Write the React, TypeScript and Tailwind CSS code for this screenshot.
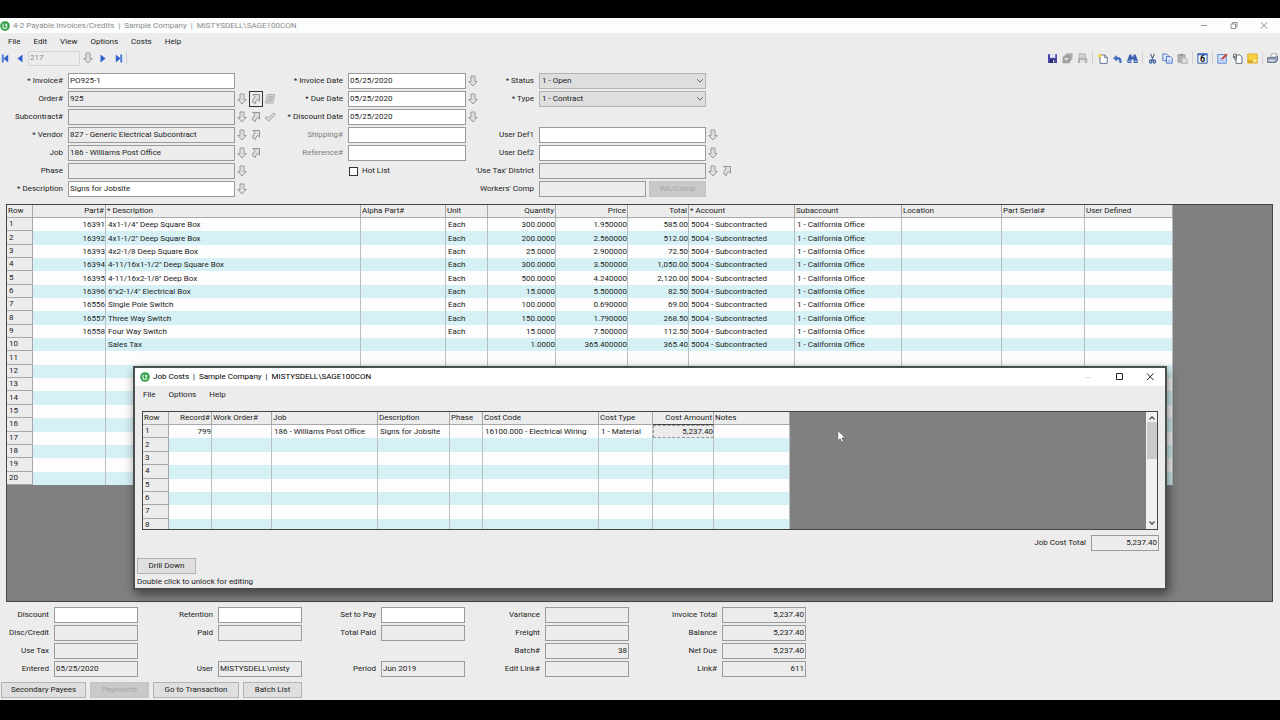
import { useId } from "react";
import type { ReactNode } from "react";

type Column = { title: string; width: number; right?: boolean };

const invoiceColumns: Column[] = [
  { title: "Row", width: 26 },
  { title: "Part#", width: 73, right: true },
  { title: "* Description", width: 255 },
  { title: "Alpha Part#", width: 85 },
  { title: "Unit", width: 42 },
  { title: "Quantity", width: 68, right: true },
  { title: "Price", width: 72, right: true },
  { title: "Total", width: 61, right: true },
  { title: "* Account", width: 106 },
  { title: "Subaccount", width: 107 },
  { title: "Location", width: 100 },
  { title: "Part Serial#", width: 83 },
  { title: "User Defined", width: 88 },
];

const ACCOUNT = "5004 - Subcontracted";
const OFFICE = "1 - California Office";

const invoiceRows: string[][] = [
  ["16391", "4x1-1/4\" Deep Square Box", "", "Each", "300.0000", "1.950000", "585.00", ACCOUNT, OFFICE],
  ["16392", "4x1-1/2\" Deep Square Box", "", "Each", "200.0000", "2.560000", "512.00", ACCOUNT, OFFICE],
  ["16393", "4x2-1/8 Deep Square Box", "", "Each", "25.0000", "2.900000", "72.50", ACCOUNT, OFFICE],
  ["16394", "4-11/16x1-1/2\" Deep Square Box", "", "Each", "300.0000", "3.500000", "1,050.00", ACCOUNT, OFFICE],
  ["16395", "4-11/16x2-1/8\" Deep Box", "", "Each", "500.0000", "4.240000", "2,120.00", ACCOUNT, OFFICE],
  ["16396", "6\"x2-1/4\" Electrical Box", "", "Each", "15.0000", "5.500000", "82.50", ACCOUNT, OFFICE],
  ["16556", "Single Pole Switch", "", "Each", "100.0000", "0.690000", "69.00", ACCOUNT, OFFICE],
  ["16557", "Three Way Switch", "", "Each", "150.0000", "1.790000", "268.50", ACCOUNT, OFFICE],
  ["16558", "Four Way Switch", "", "Each", "15.0000", "7.500000", "112.50", ACCOUNT, OFFICE],
  ["", "Sales Tax", "", "", "1.0000", "365.400000", "365.40", ACCOUNT, OFFICE],
];

const jobColumns: Column[] = [
  { title: "Row", width: 26 },
  { title: "Record#", width: 43, right: true },
  { title: "Work Order#", width: 60 },
  { title: "Job", width: 106 },
  { title: "Description", width: 72 },
  { title: "Phase", width: 33 },
  { title: "Cost Code", width: 116 },
  { title: "Cost Type", width: 54 },
  { title: "Cost Amount", width: 61, right: true },
  { title: "Notes", width: 76 },
];

const jobRows: string[][] = [
  ["799", "", "186 - Williams Post Office", "Signs for Jobsite", "", "16100.000 - Electrical Wiring", "1 - Material", "5,237.40"],
];

/* ---------- icons ---------- */

function DownArrow() {
  return (
    <svg viewBox="0 0 10 12" className="w-[10px] h-3" fill="#dedede" stroke="#9b9b9b" strokeWidth="1">
      <path d="M3 1h4v5.5h2.3L5 11 .7 6.5H3z" />
    </svg>
  );
}

function JumpArrow() {
  return (
    <svg viewBox="0 0 10 12" className="w-[10px] h-3" fill="#dedede" stroke="#929292" strokeWidth="1">
      <path d="M1.8 1.5h6.7v6.6L6.6 6.4C5.4 7.4 4.6 8.6 4.4 10.6L1.6 8.9C1.7 6.7 2.6 5 4.1 3.8z" />
    </svg>
  );
}

function ListIcon() {
  return (
    <svg viewBox="0 0 12 12" className="w-3 h-3" fill="#d6d6d6" stroke="#b0b0b0" strokeWidth="0.9">
      <path d="M3.5 1.5h7.2l-1.6 8.6H1.4z" />
      <path d="M4.4 3.8h4.8M3.8 6h4.8M3 8h5" stroke="#9a9a9a" />
    </svg>
  );
}

function CheckIcon() {
  return (
    <svg viewBox="0 0 12 12" className="w-3 h-3" fill="#e0e0e0" stroke="#959595" strokeWidth="0.9">
      <path d="M1 6.8l1.7-1.4 1.8 1.7L9.6 2l1.6 1.4-6.5 6.9z" />
    </svg>
  );
}

function AppLogo() {
  return (
    <svg viewBox="0 0 10 10" className="w-[10px] h-[10px] shrink-0">
      <circle cx="5" cy="5" r="4.8" fill="#2f9e44" />
      <path d="M3 2.4v4.8h3.8V5.4M4.8 3.2h2v1.6H5" fill="none" stroke="#fff" strokeWidth="1" />
    </svg>
  );
}

function NavIcon({ flip, bar }: { flip?: boolean; bar?: boolean }) {
  return (
    <svg viewBox="0 0 8 9" className={`w-2 h-[9px] ${flip ? "-scale-x-100" : ""}`} fill="#2f62cf">
      <path d={bar ? "M.8 .5L5.5 4.5 .8 8.5z" : "M1.5 .5L6.5 4.5 1.5 8.5z"} />
      {bar && <path d="M5.2 .5h2v8h-2z" fill="#4f82de" />}
    </svg>
  );
}

const toolIcons: Record<string, ReactNode> = {
  Save: (
    <>
      <path d="M1 1.2h9v8.8H1z" fill="#4b47a8" />
      <path d="M3 1.2h5.3v3.6H3z" fill="#e8ecff" />
      <path d="M3 6.6h5v3.4H3z" fill="#26246b" />
      <path d="M6 7.2h1.3v2.2H6z" fill="#fff" />
    </>
  ),
  "Save All": (
    <>
      <path d="M4.2 .8h6l-.4 5.4-2 2H3.4z" fill="#bcbcbc" stroke="#949494" strokeWidth=".7" />
      <path d="M1 4.4l2-1.6h5.2L7.4 9.8H1z" fill="#a6a6a6" stroke="#8a8a8a" strokeWidth=".7" />
      <path d="M2.6 5h3.4v1.8H2.6z" fill="#e3e3e3" />
    </>
  ),
  "Save As": (
    <>
      <path d="M2 .8h6.4v5H2z" fill="#d2d2d2" stroke="#a2a2a2" strokeWidth=".7" />
      <path d="M1 5h9.2v5H1z" fill="#b2b2b2" />
      <path d="M3 7h5v3H3z" fill="#e2e2e2" />
    </>
  ),
  New: (
    <>
      <path d="M3 2h4.6l2.6 2.4v6H3z" fill="#fff" stroke="#5c6b90" strokeWidth=".9" />
      <path d="M7.4 2v2.6h2.8" fill="none" stroke="#5c6b90" strokeWidth=".8" />
      <path d="M2.8 0l.8 1.7 1.9.3-1.5 1.1.3 2-1.5-1-1.6 1 .3-2L0 2l2-.3z" fill="#ecd648" />
    </>
  ),
  Undo: <path d="M1 5.2L5 2v2c3.4 0 5 1.6 4.6 6H7.4C7.6 7.4 7 6.6 5 6.6v1.8z" fill="#4470c4" />,
  Find: (
    <>
      <path d="M2.5 1.4h2v2h2v-2h2L10.6 7v3H6.7V6.6H4.3V10H.4V7z" fill="#3a5fae" />
      <path d="M1.4 7.4h2v1.6h-2zM7.7 7.4h2v1.6h-2z" fill="#b9cdf5" />
    </>
  ),
  Cut: (
    <>
      <path d="M3.6 .8l2.6 6.4M7.4 .8L4.8 7.2" stroke="#56688f" strokeWidth="1.1" />
      <ellipse cx="3.7" cy="8.6" rx="1.2" ry="1.5" fill="none" stroke="#2c4f9c" strokeWidth="1.1" />
      <ellipse cx="7.3" cy="8.6" rx="1.2" ry="1.5" fill="none" stroke="#2c4f9c" strokeWidth="1.1" />
    </>
  ),
  Copy: (
    <>
      <path d="M.8 1h4l1.6 1.6v5H.8z" fill="#dfe9ff" stroke="#4c73c4" strokeWidth=".9" />
      <path d="M4.4 3.6h4l1.8 1.8v4.8H4.4z" fill="#eef4ff" stroke="#3b65bd" strokeWidth=".9" />
      <path d="M5.6 7h3.2M5.6 8.5h3.2" stroke="#7a9be0" strokeWidth=".7" />
    </>
  ),
  Paste: (
    <>
      <path d="M1 1.8h7v7.4H1z" fill="#b3b3b3" stroke="#989898" strokeWidth=".8" />
      <path d="M3 .8h3v1.8H3z" fill="#8f8f8f" />
      <path d="M4.8 4.6h3.4L10.2 6.4v4H4.8z" fill="#dedede" stroke="#a5a5a5" strokeWidth=".8" />
    </>
  ),
  Calendar: (
    <>
      <path d="M.9 .9h9.2v9.3H.9z" fill="#f4f8ff" stroke="#375fa5" strokeWidth="1" />
      <path d="M.5 .5h10v1.8H.5z" fill="#3d6ec4" />
      <text x="5.5" y="9.2" textAnchor="middle" fontSize="9" fontWeight="700" fill="#111">6</text>
    </>
  ),
  Edit: (
    <>
      <path d="M.8 1.6h8.4v8.6H.8z" fill="#dce8ff" stroke="#5b86d0" strokeWidth="1" />
      <path d="M2.4 7.8h5M2.4 5.6h2.6" stroke="#7ea0dc" strokeWidth=".8" />
      <path d="M4.4 6.8l.5-2L9 .6l1.6 1.4L6.3 6.2z" fill="#d2453a" />
    </>
  ),
  Attach: (
    <>
      <path d="M4 2h4l2 2v6.4H4z" fill="#fff" stroke="#5f6775" strokeWidth=".9" />
      <path d="M1.4 5V2.4a1.5 1.5 0 013 0v3.4a.9.9 0 01-1.8 0V3" fill="none" stroke="#555c68" strokeWidth=".9" />
    </>
  ),
  Note: (
    <>
      <path d="M.8 1h9.4v9H.8z" fill="#f6d13f" stroke="#d9a520" strokeWidth=".9" />
      <path d="M.8 7.4h5.6V10H.8z" fill="#e0a51f" />
      <path d="M6.4 10V6.8h3.8z" fill="#fff3b8" />
    </>
  ),
  Print: (
    <>
      <path d="M3.4 4.2L4.8 .8h5L8.6 4.2z" fill="#fff" stroke="#8a93a5" strokeWidth=".8" />
      <path d="M.6 4.6h8.2l1.8-1.4v4L8.8 9.4H.6z" fill="#9aa5bb" stroke="#56617a" strokeWidth=".8" />
      <path d="M1.8 7h5.6v1.2H1.8z" fill="#e9eef8" />
    </>
  ),
};

const toolGroups = [["Save", "Save All", "Save As"], ["New", "Undo", "Find"], ["Cut", "Copy", "Paste"], ["Calendar"], ["Edit", "Attach", "Note"], ["Print"]];

const iconByName = { down: <DownArrow />, jump: <JumpArrow />, list: <ListIcon />, check: <CheckIcon /> };
const iconLabel = { down: "Lookup", jump: "Open record", list: "List", check: "Verify" };
type IconName = keyof typeof iconByName;

/* ---------- form parts ---------- */

type FieldProps = {
  label: string;
  value?: string;
  locked?: boolean;
  muted?: boolean;
  right?: boolean;
  labelClass?: string;
  width?: string;
  icons?: IconName[];
  focusIcon?: number;
  children?: ReactNode;
};

function Field({ label, value = "", locked, muted, right, labelClass = "", width = "w-[84px]", icons = [], focusIcon, children }: FieldProps) {
  const id = useId();
  return (
    <div className="flex items-center h-[18px]">
      <label htmlFor={id} className={`shrink-0 text-right whitespace-nowrap mr-[5px] ${labelClass} ${muted ? "text-[#7d7d7d]" : ""}`}>
        {label}
      </label>
      <input
        id={id}
        type="text"
        defaultValue={value}
        readOnly={locked}
        className={`shrink-0 h-4 px-px pb-px border border-[#9a9a9a] outline-none ${width} ${locked ? "bg-[#ececec]" : "bg-white"} ${right ? "text-right" : ""}`}
      />
      {icons.length > 0 && (
        <div className="flex items-center">
          {icons.map((name, i) => (
            <button
              key={name}
              type="button"
              aria-label={`${label} ${iconLabel[name]}`}
              className={`flex shrink-0 items-center justify-center w-[14px] h-4 border ${focusIcon === i ? "border-[#333]" : "border-transparent"}`}
            >
              {iconByName[name]}
            </button>
          ))}
        </div>
      )}
      {children}
    </div>
  );
}

function SelectField({ label, options }: { label: string; options: string[] }) {
  const id = useId();
  return (
    <div className="flex items-center h-[18px]">
      <label htmlFor={id} className="w-[59px] mr-[5px] text-right whitespace-nowrap">{label}</label>
      <div className="relative">
        <select id={id} className="block w-[167px] h-4 pl-0.5 appearance-none border border-[#b4b4b4] bg-[#dedede] outline-none">
          {options.map((o) => <option key={o}>{o}</option>)}
        </select>
        <svg viewBox="0 0 8 6" className="absolute right-[2px] top-[5px] w-2 h-1.5 pointer-events-none" fill="none" stroke="#666" strokeWidth="1">
          <path d="M1.2 1.2L4 4.2l2.8-3" />
        </svg>
      </div>
    </div>
  );
}

function PushButton({ children, width, disabled }: { children: ReactNode; width: string; disabled?: boolean }) {
  return (
    <button
      type="button"
      disabled={disabled}
      className={`h-4 border whitespace-nowrap ${width} ${disabled ? "bg-[#c9c9c9] border-[#c4c4c4] text-[#a6a6a6]" : "bg-[#dfdfdf] border-[#b4b4b4]"}`}
    >
      {children}
    </button>
  );
}

function MenuBar({ items }: { items: string[] }) {
  return (
    <nav className="flex items-center h-4 px-2 pt-px gap-[13px]">
      {items.map((item) => (
        <button key={item} type="button" className="whitespace-nowrap">{item}</button>
      ))}
    </nav>
  );
}

type GridProps = { columns: Column[]; rows: string[][]; count: number; className: string; active?: number };

function DataGrid({ columns, rows, count, className, active }: GridProps) {
  const total = columns.reduce((sum, c) => sum + c.width, 0);
  return (
    <table className={`table-fixed border-separate border-spacing-0 leading-3 ${className}`} style={{ width: total }}>
      <colgroup>
        {columns.map((c) => <col key={c.title} style={{ width: c.width }} />)}
      </colgroup>
      <thead>
        <tr>
          {columns.map((c, i) => (
            <th
              key={c.title}
              className={`p-0 px-px font-normal whitespace-nowrap bg-[#ececec] border-r border-b border-r-[#a8a8a8] ${c.right ? "text-right" : "text-left"} ${i === active ? "border-b-[#444]" : "border-b-[#a8a8a8]"}`}
            >
              {c.title}
            </th>
          ))}
        </tr>
      </thead>
      <tbody>
        {Array.from({ length: count }, (_, r) => (
          <tr key={r} className={r % 2 ? "bg-[#d6f1f5]" : "bg-[#fdfdfd]"}>
            <th scope="row" className="p-0 pl-0.5 font-normal text-left bg-[#ececec] border-r border-b border-[#a8a8a8]">{r + 1}</th>
            {columns.slice(1).map((c, i) => (
              <td
                key={c.title}
                className={`p-0 pt-px whitespace-nowrap border-r border-[#b7bfc0] ${c.right ? "text-right" : "pl-0.5"} ${r === 0 && i + 1 === active ? "bg-[#ececec] outline-1 outline-dashed outline-[#999] -outline-offset-1" : ""}`}
              >
                {rows[r]?.[i] ?? ""}
              </td>
            ))}
          </tr>
        ))}
      </tbody>
    </table>
  );
}

/* ---------- windows ---------- */

function JobCosts() {
  return (
    <section className="absolute left-[133px] right-[113px] top-[348px] flex flex-col bg-[#ececec] border-2 border-[#4b504f] shadow-[2px_4px_10px_rgba(0,0,0,0.5)]">
      <header className="flex items-center h-[18px] pl-[5px] bg-white text-black">
        <AppLogo />
        <h2 className="ml-[3px] whitespace-pre">Job Costs  |  Sample Company  |  MISTYSDELL\SAGE100CON</h2>
        <div className="flex items-center ml-auto pr-[10px] gap-[21px]">
          <button type="button" aria-label="Minimize" disabled>
            <svg viewBox="0 0 10 10" className="w-[10px] h-[10px]" stroke="#ddd"><path d="M2 5.5h6" /></svg>
          </button>
          <button type="button" aria-label="Maximize">
            <svg viewBox="0 0 10 10" className="w-[10px] h-[10px]" fill="none" stroke="#222"><path d="M2.5 1.5h6v6h-6z" /></svg>
          </button>
          <button type="button" aria-label="Close">
            <svg viewBox="0 0 10 10" className="w-[10px] h-[10px]" stroke="#222"><path d="M2 1.5l6.5 6.5M8.5 1.5L2 8" /></svg>
          </button>
        </div>
      </header>
      <MenuBar items={["File", "Options", "Help"]} />
      <div className="flex h-[119px] mt-[9px] ml-[7px] mr-[7px] bg-[#808080] border border-[#444] overflow-hidden">
        <DataGrid columns={jobColumns} rows={jobRows} count={8} className="h-[120px]" active={8} />
        <div className="flex flex-col items-center ml-auto w-[11px] bg-[#f0f0f0]">
          <svg viewBox="0 0 8 6" className="w-2 h-1.5 mt-[3px] mb-px" fill="none" stroke="#444" strokeWidth="1.2"><path d="M1.5 4.5L4 1.8l2.5 2.7" /></svg>
          <div className="w-[10px] h-[37px] bg-[#cacaca]" />
          <svg viewBox="0 0 8 6" className="w-2 h-1.5 mt-auto mb-[3px]" fill="none" stroke="#444" strokeWidth="1.2"><path d="M1.5 1.5L4 4.2l2.5-2.7" /></svg>
        </div>
      </div>
      <div className="flex justify-end mt-1 mr-1.5">
        <Field label="Job Cost Total" value="5,237.40" width="w-[68px]" locked right />
      </div>
      <div className="flex mt-1.5 ml-0.5">
        <PushButton width="w-[59px]">Drill Down</PushButton>
      </div>
      <p className="h-[14px] ml-0.5 leading-4">Double click to unlock for editing</p>
    </section>
  );
}

function Toolbar() {
  return (
    <div className="flex items-center h-[18px]">
      <button type="button" aria-label="First record" className="ml-px"><NavIcon flip bar /></button>
      <button type="button" aria-label="Previous record" className="ml-[7px]"><NavIcon flip /></button>
      <input aria-label="Record" defaultValue="217" className="w-[52px] h-[15px] ml-1 px-px pb-px border border-[#d5d5d5] bg-[#ececec] text-[#8a8a8a] outline-none" />
      <button type="button" aria-label="Record list" className="ml-[3px]"><DownArrow /></button>
      <button type="button" aria-label="Next record" className="ml-1.5"><NavIcon /></button>
      <button type="button" aria-label="Last record" className="ml-2"><NavIcon bar /></button>
      <span className="w-px h-3 ml-[3px] bg-[#cfcfcf]" />
      <div className="flex items-center ml-auto">
        {toolGroups.map((group, g) => (
          <div key={g} className="flex items-center">
            {g > 0 && <span className="w-px h-3 mx-0.5 bg-[#cfcfcf]" />}
            {group.map((name) => (
              <button key={name} type="button" aria-label={name} className="mx-0.5">
                <svg viewBox="0 0 11 11" className="w-[11px] h-[11px]" fill="none">{toolIcons[name]}</svg>
              </button>
            ))}
          </div>
        ))}
      </div>
    </div>
  );
}

function InvoiceForm() {
  const a = { labelClass: "w-[63px]", width: "w-[167px]" };
  const b = { labelClass: "w-[68px]", width: "w-[118px]" };
  const c = { labelClass: "w-[59px]", width: "w-[167px]" };
  return (
    <form className="flex pt-[5px]">
      <div className="shrink-0 w-[275px]">
        <Field {...a} label="* Invoice#" value="PO925-1" />
        <Field {...a} label="Order#" value="925" locked icons={["down", "jump", "list"]} focusIcon={1} />
        <Field {...a} label="Subcontract#" locked icons={["down", "jump", "check"]} />
        <Field {...a} label="* Vendor" value="827 - Generic Electrical Subcontract" locked icons={["down", "jump"]} />
        <Field {...a} label="Job" value="186 - Williams Post Office" locked icons={["down", "jump"]} />
        <Field {...a} label="Phase" locked icons={["down"]} />
        <Field {...a} label="* Description" value="Signs for Jobsite" icons={["down"]} />
      </div>
      <div className="shrink-0 w-[200px]">
        <Field {...b} label="* Invoice Date" value="05/25/2020" icons={["down"]} />
        <Field {...b} label="* Due Date" value="05/25/2020" icons={["down"]} />
        <Field {...b} label="* Discount Date" value="05/25/2020" icons={["down"]} />
        <Field {...b} label="Shipping#" muted />
        <Field {...b} label="Reference#" muted />
        <label className="flex items-center h-[18px] ml-[74px] gap-1">
          <input type="checkbox" className="w-[9px] h-[9px] appearance-none border border-[#333] bg-white" />
          Hot List
        </label>
      </div>
      <div className="shrink-0">
        <SelectField label="* Status" options={["1 - Open", "2 - Review", "3 - Dispute", "4 - Paid"]} />
        <SelectField label="* Type" options={["1 - Contract", "2 - Memo"]} />
        <div className="h-[18px]" />
        <Field {...c} label="User Def1" icons={["down"]} />
        <Field {...c} label="User Def2" icons={["down"]} />
        <Field {...c} label="'Use Tax' District" locked icons={["down", "jump"]} />
        <Field {...c} label="Workers' Comp" width="w-[107px]" locked>
          <div className="flex ml-[3px]">
            <PushButton width="w-[57px]" disabled>Wk/Comp</PushButton>
          </div>
        </Field>
      </div>
    </form>
  );
}

function Totals() {
  return (
    <div className="flex items-start pt-1">
      <div className="flex flex-col items-end w-[138px]">
        <Field label="Discount" />
        <Field label="Disc/Credit" locked />
        <Field label="Use Tax" locked />
        <Field label="Entered" value="05/25/2020" locked />
      </div>
      <div className="flex flex-col items-end w-[164px]">
        <Field label="Retention" />
        <Field label="Paid" locked />
        <div className="h-[18px]" />
        <Field label="User" value="MISTYSDELL\misty" locked />
      </div>
      <div className="flex flex-col items-end w-[163px]">
        <Field label="Set to Pay" />
        <Field label="Total Paid" locked />
        <div className="h-[18px]" />
        <Field label="Period" value="Jun 2019" locked />
      </div>
      <div className="flex flex-col items-end w-[164px]">
        <Field label="Variance" locked />
        <Field label="Freight" locked />
        <Field label="Batch#" value="38" locked right />
        <Field label="Edit Link#" locked />
      </div>
      <div className="flex flex-col items-end w-[177px]">
        <Field label="Invoice Total" value="5,237.40" locked right />
        <Field label="Balance" value="5,237.40" locked right />
        <Field label="Net Due" value="5,237.40" locked right />
        <Field label="Link#" value="611" locked right />
      </div>
    </div>
  );
}

export default function App() {
  return (
    <div className="min-h-screen flex flex-col bg-black pt-[18px] pb-5 font-[Roboto,'Open_Sans',sans-serif] text-[8px] leading-3 text-[#222]">
      <main className="relative flex-1 flex flex-col bg-[#ececec]">
        <header className="flex items-center h-[15px] bg-[#fcfdfd] text-[#8b8b8b]">
          <AppLogo />
          <h1 className="ml-[3px] whitespace-pre">4-2 Payable Invoices/Credits  |  Sample Company  |  MISTYSDELL\SAGE100CON</h1>
          <div className="flex items-center ml-auto pr-[11px] gap-5">
            <button type="button" aria-label="Minimize">
              <svg viewBox="0 0 10 10" className="w-[10px] h-[10px]" stroke="#999"><path d="M2 4.5h6" /></svg>
            </button>
            <button type="button" aria-label="Restore">
              <svg viewBox="0 0 10 10" className="w-[10px] h-[10px]" fill="none" stroke="#888" strokeWidth=".9"><path d="M2 3h4.5v4.5H2zM3.5 3V1.5H8V6H6.5" /></svg>
            </button>
            <button type="button" aria-label="Close">
              <svg viewBox="0 0 10 10" className="w-[10px] h-[10px]" stroke="#888"><path d="M2 1.5l6 6M8 1.5l-6 6" /></svg>
            </button>
          </div>
        </header>
        <MenuBar items={["File", "Edit", "View", "Options", "Costs", "Help"]} />
        <Toolbar />
        <InvoiceForm />
        <div className="flex-1 mt-1.5 ml-1.5 mr-[7px] bg-[#808080] border border-[#444] overflow-hidden">
          <DataGrid columns={invoiceColumns} rows={invoiceRows} count={20} className="h-[280px]" />
        </div>
        <Totals />
        <div className="flex gap-1 pt-1 pb-0.5 pl-px">
          <PushButton width="w-[85px]">Secondary Payees</PushButton>
          <PushButton width="w-[59px]" disabled>Payments</PushButton>
          <PushButton width="w-[86px]">Go to Transaction</PushButton>
          <PushButton width="w-[59px]">Batch List</PushButton>
        </div>
        <JobCosts />
        <svg viewBox="0 0 9 13" className="absolute left-[837px] top-[412px] w-[9px] h-[13px] pointer-events-none" fill="#fff" stroke="#333" strokeWidth=".5">
          <path d="M.8 .6v10.2l2.4-2.1 1.5 3.5 1.8-.8L5 8h3.4z" />
        </svg>
      </main>
    </div>
  );
}
